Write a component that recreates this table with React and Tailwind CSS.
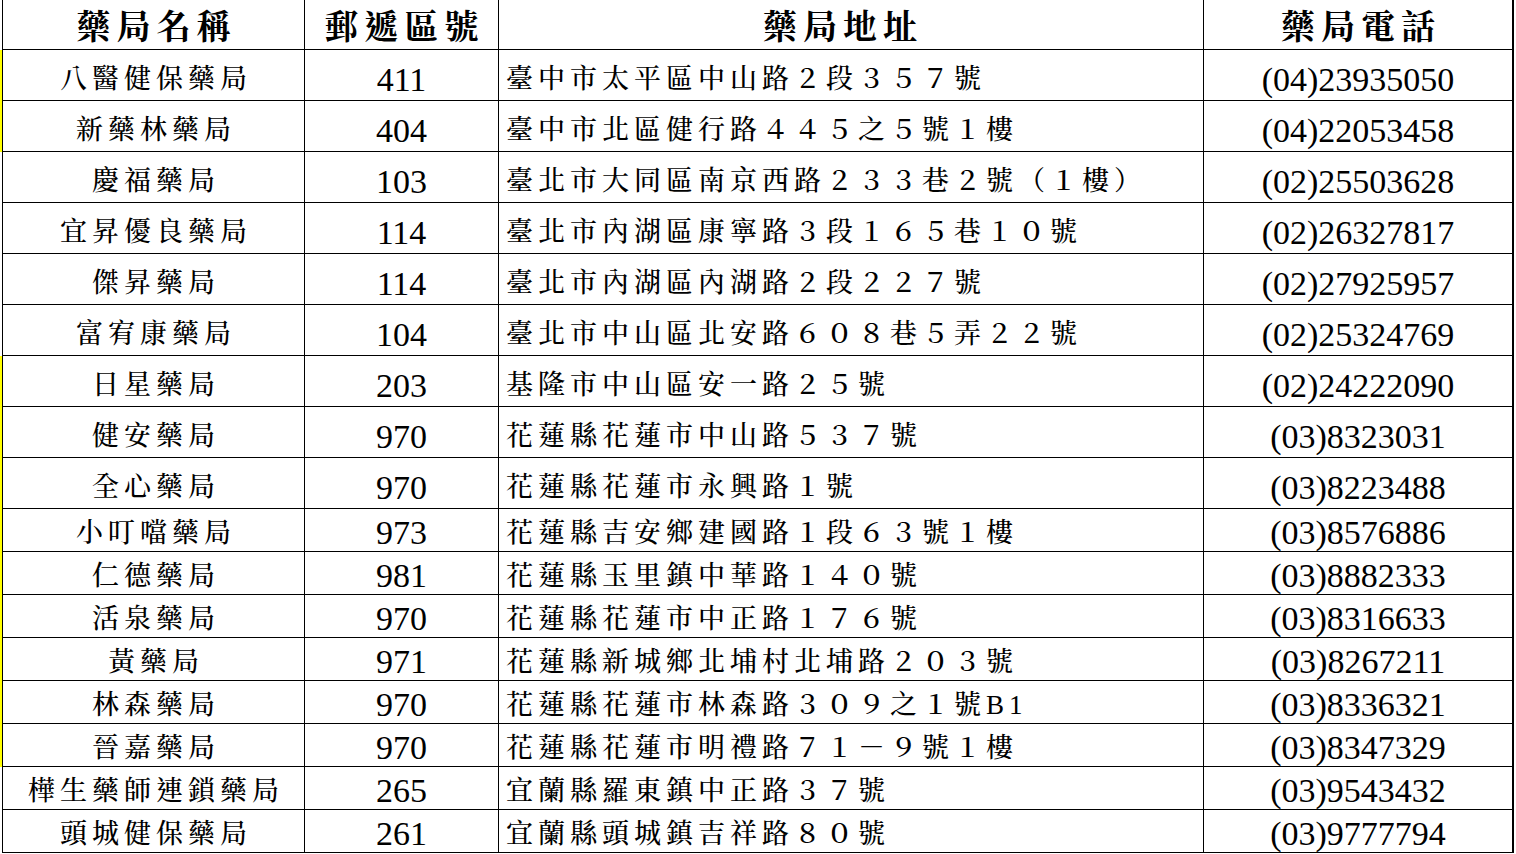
import React from "react";

const rows = [
  ["八醫健保藥局", "411", "臺中市太平區中山路２段３５７號", "(04)23935050", true, "h-[51px]"],
  ["新藥林藥局", "404", "臺中市北區健行路４４５之５號１樓", "(04)22053458", true, "h-[51px]"],
  ["慶福藥局", "103", "臺北市大同區南京西路２３３巷２號（１樓）", "(02)25503628", false, "h-[51px]"],
  ["宜昇優良藥局", "114", "臺北市內湖區康寧路３段１６５巷１０號", "(02)26327817", false, "h-[51px]"],
  ["傑昇藥局", "114", "臺北市內湖區內湖路２段２２７號", "(02)27925957", false, "h-[51px]"],
  ["富宥康藥局", "104", "臺北市中山區北安路６０８巷５弄２２號", "(02)25324769", false, "h-[51px]"],
  ["日星藥局", "203", "基隆市中山區安一路２５號", "(02)24222090", true, "h-[51px]"],
  ["健安藥局", "970", "花蓮縣花蓮市中山路５３７號", "(03)8323031", true, "h-[51px]"],
  ["全心藥局", "970", "花蓮縣花蓮市永興路１號", "(03)8223488", true, "h-[51px]"],
  ["小叮噹藥局", "973", "花蓮縣吉安鄉建國路１段６３號１樓", "(03)8576886", true, "h-[43px]"],
  ["仁德藥局", "981", "花蓮縣玉里鎮中華路１４０號", "(03)8882333", true, "h-[43px]"],
  ["活泉藥局", "970", "花蓮縣花蓮市中正路１７６號", "(03)8316633", true, "h-[43px]"],
  ["黃藥局", "971", "花蓮縣新城鄉北埔村北埔路２０３號", "(03)8267211", true, "h-[43px]"],
  ["林森藥局", "970", "花蓮縣花蓮市林森路３０９之１號B1", "(03)8336321", true, "h-[43px]"],
  ["晉嘉藥局", "970", "花蓮縣花蓮市明禮路７１－９號１樓", "(03)8347329", true, "h-[43px]"],
  ["樺生藥師連鎖藥局", "265", "宜蘭縣羅東鎮中正路３７號", "(03)9543432", false, "h-[43px]"],
  ["頭城健保藥局", "261", "宜蘭縣頭城鎮吉祥路８０號", "(03)9777794", false, "h-[43px]"],
];

const CJK = "[font-family:'Liberation_Serif','Noto_Serif_CJK_TC','Noto_Sans_CJK_TC',serif]";
const NUM = "[font-family:'Liberation_Serif',serif]";

function Header() {
  const hcell = "flex items-center justify-center border-r border-black pt-[6px]";
  const htext = `${CJK} font-bold text-[34px] tracking-[6px] leading-none`;
  return (
    <div className="flex h-[50px]">
      <div className="w-[2px] shrink-0" />
      <div className="flex border-l border-b border-black">
        <div className={`${hcell} w-[302px] pl-[6px]`}>
          <span className={htext}>藥局名稱</span>
        </div>
        <div className={`${hcell} w-[194px] pl-[6px]`}>
          <span className={htext}>郵遞區號</span>
        </div>
        <div className={`${hcell} w-[705px] pr-[16px]`}>
          <span className={htext}>藥局地址</span>
        </div>
        <div className="flex w-[310px] items-center justify-center border-r-2 border-black pl-[6px] pt-[6px]">
          <span className={htext}>藥局電話</span>
        </div>
      </div>
    </div>
  );
}

function Row({ name, zip, addr, phone, yellow, h }) {
  const pad = h === "h-[51px]" ? "pt-[9px]" : "pt-[6px]";
  return (
    <div className={`flex ${h}`}>
      <div className={`w-[2px] shrink-0 ${yellow ? "bg-[#ffff00]" : ""}`} />
      <div className="flex border-l border-b border-black">
        <div className={`flex w-[302px] items-center justify-center border-r border-black pl-[5px] ${pad}`}>
          <span className={`${CJK} font-medium text-[27px] tracking-[5px] leading-none text-black`}>{name}</span>
        </div>
        <div className={`flex w-[194px] items-center justify-center border-r border-black ${pad}`}>
          <span className={`${NUM} text-[34px] leading-none text-black`}>{zip}</span>
        </div>
        <div className={`flex w-[705px] items-center justify-start border-r border-black pl-[7px] ${pad}`}>
          <span className={`${CJK} font-medium text-[27px] tracking-[5px] leading-none text-black whitespace-nowrap`}>{addr}</span>
        </div>
        <div className={`flex w-[310px] items-center justify-center border-r-2 border-black ${pad}`}>
          <span className={`${NUM} text-[34px] leading-none text-black`}>{phone}</span>
        </div>
      </div>
    </div>
  );
}

export default function App() {
  return (
    <div className="w-[1516px] h-[854px] bg-white overflow-hidden">
      <Header />
      {rows.map((r, i) => (
        <Row key={i} name={r[0]} zip={r[1]} addr={r[2]} phone={r[3]} yellow={r[4]} h={r[5]} />
      ))}
    </div>
  );
}
